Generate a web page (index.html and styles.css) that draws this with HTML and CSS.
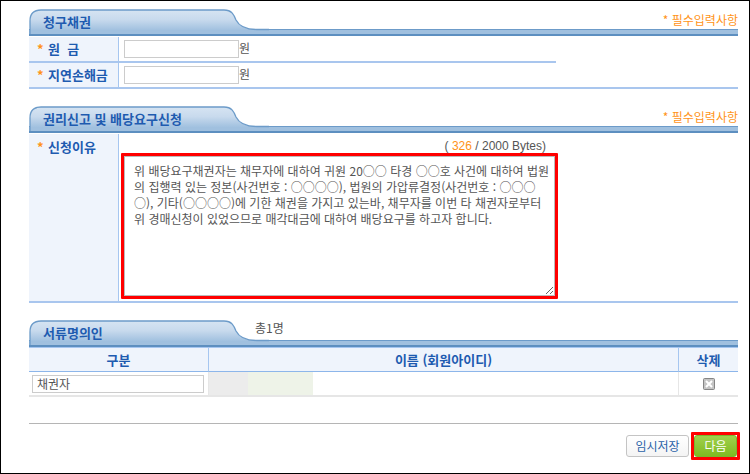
FILE: index.html
```
<!DOCTYPE html>
<html lang="ko">
<head>
  <meta charset="UTF-8" />
  <meta name="viewport" content="width=device-width, initial-scale=1.0" />
  <title>권리신고 및 배당요구신청</title>
  <link rel="stylesheet" href="styles.css">
</head>
<body>

  <!-- Tab shape shared by the section headers -->
  <svg class="defs" width="0" height="0" aria-hidden="true">
    <defs>
      <linearGradient id="tabFill" x1="0" y1="0" x2="0" y2="1">
        <stop offset="0" stop-color="#d6e4f2" />
        <stop offset="0.4" stop-color="#c8daed" />
        <stop offset="0.85" stop-color="#a0c0df" />
        <stop offset="1" stop-color="#a0c0df" />
      </linearGradient>
      <symbol id="tab" viewBox="0 0 240 27">
        <path d="M1 25V12Q1 1 12 1H195C203 1 205 6 207 11C210 17 217 20.500 228 20.500H240V25Z" fill="url(#tabFill)" />
        <path d="M1 25V12Q1 1 12 1H195C203 1 205 6 207 11C210 17 217 20.500 228 20.500H240" fill="none" stroke="#6c9bc9" stroke-width="1.300" />
        <path d="M0 26H240" stroke="#5d8fc0" stroke-width="2" />
      </symbol>
    </defs>
  </svg>

  <form class="container">
    <section>
      <div class="section-head">
        <h2><svg class="tab" aria-hidden="true"><use href="#tab" /></svg><span>청구채권</span></h2>
        <p class="required">* 필수입력사항</p>
      </div>
      <table class="form-table">
        <tr>
          <th><label for="principal"><i>*</i>원 &nbsp;금</label></th>
          <td class="field"><input type="text" id="principal">원</td>
          <td class="blank"></td>
        </tr>
        <tr>
          <th><label for="damages"><i>*</i>지연손해금</label></th>
          <td class="field"><input type="text" id="damages">원</td>
          <td></td>
        </tr>
      </table>
    </section>

    <section>
      <div class="section-head">
        <h2><svg class="tab" aria-hidden="true"><use href="#tab" /></svg><span>권리신고 및 배당요구신청</span></h2>
        <p class="required">* 필수입력사항</p>
      </div>
      <table class="form-table">
        <tr>
          <th class="reason-label"><label for="reason"><i>*</i>신청이유</label></th>
          <td class="reason-cell">
            <p class="bytes">( <b>326</b> / 2000 Bytes)</p>
            <div class="highlight">
              <textarea id="reason">위 배당요구채권자는 채무자에 대하여 귀원 20○○ 타경 ○○호 사건에 대하여 법원
의 집행력 있는 정본(사건번호 : ○○○○), 법원의 가압류결정(사건번호 : ○○○
○), 기타(○○○○)에 기한 채권을 가지고 있는바, 채무자를 이번 타 채권자로부터
위 경매신청이 있었으므로 매각대금에 대하여 배당요구를 하고자 합니다.</textarea>
            </div>
          </td>
        </tr>
      </table>
    </section>

    <section>
      <div class="section-head">
        <h2><svg class="tab" aria-hidden="true"><use href="#tab" /></svg><span>서류명의인</span></h2>
        <p class="total">총1명</p>
      </div>
      <table class="list-table">
        <thead>
          <tr>
            <th class="col-type">구분</th>
            <th>이름 (회원아이디)</th>
            <th class="col-delete">삭제</th>
          </tr>
        </thead>
        <tbody>
          <tr>
            <td class="type"><input type="text" value="채권자" aria-label="구분"></td>
            <td><div class="masked"></div></td>
            <td>
              <button type="button" class="delete-btn" aria-label="삭제">
                <svg width="12" height="12" viewBox="0 0 12 12" aria-hidden="true">
                  <rect x="0.500" y="0.500" width="11" height="11" rx="1" fill="#c4c4c4" stroke="#858585" />
                  <path d="M3 3L9 9M9 3L3 9" stroke="#fff" stroke-width="2" />
                </svg>
              </button>
            </td>
          </tr>
        </tbody>
      </table>
    </section>

    <div class="actions">
      <button type="button" class="save-btn">임시저장</button>
      <div class="highlight">
        <button type="submit" class="next-btn">다음</button>
      </div>
    </div>
  </form>

</body>
</html>
```

FILE: styles.css
```
* {
  box-sizing: border-box;
}

body {
  margin: 0;
  min-height: 100vh;
  padding: 8px 11px 12px 28px;
  border: 1px solid #000;
  background-color: #fff;
  font-family: "Noto Sans CJK KR", sans-serif;
  font-size: 12px;
  line-height: 16px;
  color: #555;
}

.defs {
  position: absolute;
}

h2, p {
  margin: 0;
}

input, textarea, button {
  font: inherit;
  color: inherit;
}

/* section header: tab on the left, thin bar across the bottom */
.section-head {
  display: flex;
  justify-content: space-between;
  height: 27px;
  background: linear-gradient(#6c9bc9 1px, #a0c0df 1px, #a0c0df 5px, #5d8fc0 5px) bottom / 100% 7px no-repeat;
}

.section-head h2 {
  position: relative;
  width: 226px;
  padding: 5px 0 0 14px;
  font-size: 13px;
  color: #1e5bb0;
}

.section-head h2 span {
  position: relative;
}

.tab {
  position: absolute;
  left: 0;
  top: 0;
  width: 240px;
  height: 27px;
}

.required {
  padding-top: 3px;
  color: #ff9318;
}

.total {
  flex: 1;
}

table {
  width: 100%;
  border-collapse: separate;
  border-spacing: 0;
}

th {
  background-color: #eff4fc;
  font-size: 13px;
  color: #1e5bb0;
}

th, td {
  padding: 0;
}

.form-table {
  margin: 1px 0 17px;
}

.form-table th {
  width: 90px;
  height: 26px;
  padding-left: 8px;
  border-right: 1px solid #a6c6f0;
  border-bottom: 2px solid #a9c6ee;
  text-align: left;
}

.form-table td {
  border-bottom: 2px solid #a9c6ee;
}

.form-table .blank {
  border-bottom: none;
}

.form-table i {
  display: inline-block;
  width: 11px;
  font-style: normal;
  color: #ff9318;
}

.field {
  width: 437px;
  padding-left: 5px;
}

.field input {
  width: 115px;
  height: 18px;
  border: 1px solid #ccc;
  vertical-align: middle;
}

.form-table .reason-label {
  padding-top: 5px;
  vertical-align: top;
}

.reason-cell {
  padding: 5px 0 2px 2px;
}

.bytes {
  width: 425px;
  font-family: "Liberation Sans", sans-serif;
  line-height: 14px;
  text-align: right;
}

.bytes b {
  font-weight: normal;
  color: #ff9318;
}

.highlight {
  border: 3px solid #f00;
  border-radius: 1px;
}

.reason-cell .highlight {
  width: 437px;
}

textarea {
  display: block;
  width: 100%;
  height: 140px;
  padding: 6px 2px 6px 9px;
  border: 1px solid #bbb;
}

.list-table th {
  height: 25px;
  border-top: 1px solid #a6c6f0;
  border-right: 1px solid #a6c6f0;
  border-bottom: 1px solid #8db6ea;
}

.list-table td {
  height: 25px;
  border-right: 1px solid #e6e6e6;
  border-bottom: 2px solid #e6e6e6;
}

.list-table th:last-child,
.list-table td:last-child {
  border-right: none;
}

.col-type {
  width: 180px;
}

.col-delete {
  width: 59px;
}

.list-table .type {
  padding: 0 4px 0 3px;
}

.type input {
  display: block;
  width: 100%;
  height: 18px;
  padding: 0 4px;
  border: 1px solid #ccc;
}

.masked {
  width: 104px;
  height: 23px;
  background: linear-gradient(90deg, #ececec 39px, #eef3e8 39px);
}

.delete-btn {
  display: block;
  width: 12px;
  height: 12px;
  margin: 0 auto;
  padding: 0;
  border: none;
  background: none;
}

.delete-btn svg {
  display: block;
}

.actions {
  display: flex;
  justify-content: flex-end;
  align-items: center;
  gap: 2px;
  margin: 26px -2px 0 0;
  padding-top: 9px;
  position: relative;
}

.actions::before {
  content: "";
  position: absolute;
  left: 0;
  right: 2px;
  top: 0;
  border-top: 1px solid #b5b5b5;
}

.actions button {
  display: block;
  height: 22px;
  padding: 0;
  border-radius: 3px;
  line-height: 18px;
}

.save-btn {
  width: 63px;
  border: 1px solid #c4c4c4;
  background: linear-gradient(#fff, #f4f4f4);
  color: #2a62a8;
}

.next-btn {
  width: 43px;
  border: 1px solid #7ab62c;
  background: linear-gradient(#a0d04c, #7fba22);
  color: #fff;
}
```
